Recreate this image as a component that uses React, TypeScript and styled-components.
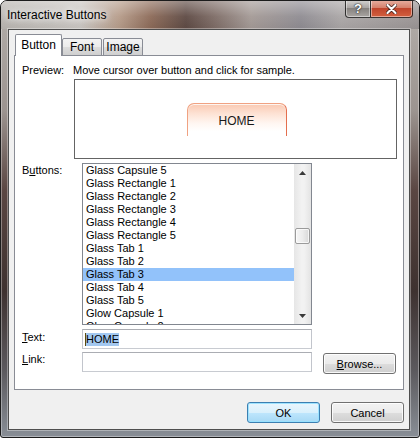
import React from "react";
import styled, { createGlobalStyle } from "styled-components";

const GlobalStyle = createGlobalStyle`
	html, body {
		margin: 0;
		padding: 0;
		background: #ffffff;
	}
	body {
		width: 420px;
		height: 438px;
		overflow: hidden;
	}
	* {
		box-sizing: border-box;
	}
`;

const uiFont = `"Liberation Sans", Arial, sans-serif`;

const Window = styled.div`
	width: 420px;
	height: 438px;
	display: flex;
	flex-direction: column;
	border: 1px solid #1c1c1c;
	border-radius: 7px 7px 3px 3px;
	overflow: hidden;
	font-family: ${uiFont};
	font-size: 11px;
	color: #000;
	background: linear-gradient(
		180deg,
		#b4afab 0px,
		#9c9490 110px,
		#5a4642 190px,
		#3e3230 290px,
		#5c5a5e 370px,
		#8a9098 438px
	);
	box-shadow: inset 0 0 0 1px rgba(255, 255, 255, 0.35);
`;

const TitleBar = styled.div`
	height: 28px;
	display: flex;
	align-items: center;
	padding-left: 6px;
	background:
		linear-gradient(180deg, rgba(255, 255, 255, 0.35), rgba(255, 255, 255, 0.05) 55%, rgba(0, 0, 0, 0.04)),
		linear-gradient(
			90deg,
			#b9b5b1 0px,
			#cbc7c3 80px,
			#b69c8a 118px,
			#8c6a58 150px,
			#5e4a44 185px,
			#7c6a64 212px,
			#a49a96 250px,
			#8f8c92 300px,
			#aaa6a6 340px,
			#9a9494 420px
		);
`;

const Title = styled.span`
	flex: 1;
	font-size: 12px;
	padding-bottom: 1px;
	text-shadow: 0 0 6px #ffffff, 0 0 10px rgba(255, 255, 255, 0.9);
`;

const CaptionGroup = styled.div`
	align-self: flex-start;
	display: flex;
	margin-right: 6px;
	margin-top: -1px;
`;

const CaptionButton = styled.div<{ $close?: boolean }>`
	width: ${(p) => (p.$close ? 42 : 26)}px;
	height: 18px;
	display: flex;
	align-items: center;
	justify-content: center;
	border: 1px solid rgba(30, 30, 30, 0.85);
	border-top: none;
	border-left-width: ${(p) => (p.$close ? 0 : 1)}px;
	border-radius: ${(p) => (p.$close ? "0 0 4px 0" : "0 0 0 4px")};
	color: #fff;
	font-weight: bold;
	font-size: 13px;
	text-shadow: 0 0 2px #222, 0 0 1px #000;
	box-shadow: inset 0 0 0 1px rgba(255, 255, 255, 0.45);
	background: ${(p) =>
		p.$close
			? "linear-gradient(180deg, #e8b0a2 0%, #d5816c 45%, #c0452c 50%, #d3603f 100%)"
			: "linear-gradient(180deg, #d6d4d2 0%, #aaa6a4 45%, #86827f 50%, #a9a5a2 100%)"};
`;

const Frame = styled.div`
	flex: 1;
	display: flex;
	padding: 0 9px 7px 7px;
`;

const Client = styled.div`
	flex: 1;
	display: flex;
	flex-direction: column;
	background: #f0f0f0;
	border: 1px solid #4e4e4e;
	box-shadow: 0 0 0 1px rgba(255, 255, 255, 0.35);
	padding: 4px 5px 0 5px;
`;

const TabStrip = styled.div`
	height: 22px;
	display: flex;
	align-items: flex-end;
	padding-left: 1px;
	margin-bottom: -1px;
	position: relative;
	z-index: 1;
`;

const Tab = styled.div<{ $active?: boolean; $w: number; $gap?: number }>`
	width: ${(p) => p.$w}px;
	height: ${(p) => (p.$active ? 22 : 18)}px;
	margin-left: ${(p) => p.$gap ?? 0}px;
	display: flex;
	align-items: center;
	justify-content: center;
	padding-bottom: ${(p) => (p.$active ? 2 : 1)}px;
	border: 1px solid #898c95;
	border-bottom: ${(p) => (p.$active ? "none" : "1px solid #898c95")};
	border-radius: 2px 2px 0 0;
	font-size: 12px;
	background: ${(p) =>
		p.$active ? "#ffffff" : "linear-gradient(180deg, #f3f3f3 0%, #ebebeb 50%, #dddddd 51%, #cfcfcf 100%)"};
`;

const Panel = styled.div`
	width: 390px;
	height: 335px;
	display: flex;
	flex-direction: column;
	background: #ffffff;
	border: 1px solid #898c95;
	padding-left: 7px;
`;

const Row = styled.div<{ $mt: number }>`
	display: flex;
	align-items: flex-start;
	margin-top: ${(p) => p.$mt}px;
`;

const Label = styled.div<{ $w: number; $pt?: number }>`
	width: ${(p) => p.$w}px;
	flex-shrink: 0;
	line-height: 13px;
	padding-top: ${(p) => p.$pt ?? 0}px;
	font-size: 11px;
`;

const Hint = styled.div`
	line-height: 13px;
`;

const PreviewBox = styled.div`
	width: 323px;
	height: 80px;
	margin: 2px 0 0 52px;
	border: 1px solid #646464;
	display: flex;
	justify-content: center;
	padding-top: 23px;
	padding-left: 2px;
`;

const GlassTab = styled.div`
	width: 100px;
	height: 33px;
	display: flex;
	justify-content: center;
	padding-top: 10px;
	font-size: 12px;
	color: #1a1a1a;
	border: 1.5px solid #f0a282;
	border-right-color: #e46f4e;
	border-bottom: none;
	border-radius: 7px 7px 0 0;
	background: linear-gradient(180deg, #fac9b2 0%, #fde2d4 30%, #fff6f1 60%, #ffffff 85%);
	box-shadow: inset 0 1px 0 rgba(255, 255, 255, 0.8);
`;

const ListBox = styled.div`
	width: 230px;
	height: 162px;
	display: flex;
	border: 1px solid #828790;
	background: #ffffff;
`;

const ListItems = styled.div`
	flex: 1;
	overflow: hidden;
`;

const ListItem = styled.div<{ $selected?: boolean }>`
	height: 13px;
	line-height: 13px;
	padding-left: 3px;
	white-space: nowrap;
	font-size: 11px;
	background: ${(p) => (p.$selected ? "#92c2fa" : "transparent")};
`;

const ScrollBar = styled.div`
	width: 17px;
	display: flex;
	flex-direction: column;
	background: linear-gradient(90deg, #e6e6e6 0%, #f2f2f2 45%, #f2f2f2 60%, #e3e3e3 100%);
`;

const ScrollArrow = styled.div`
	height: 17px;
	display: flex;
	align-items: center;
	justify-content: center;
`;

const ScrollTrack = styled.div`
	flex: 1;
	padding: 47px 1px 0 1px;
`;

const ScrollThumb = styled.div`
	height: 16px;
	border: 1px solid #9b9b9b;
	border-radius: 2px;
	background: linear-gradient(90deg, #f6f6f6 0%, #ececec 50%, #d8d8d8 100%);
	box-shadow: inset 0 0 0 1px rgba(255, 255, 255, 0.7);
`;

const TextBox = styled.div`
	width: 230px;
	height: 20px;
	display: flex;
	align-items: center;
	padding-left: 2px;
	border: 1px solid #abadb3;
	border-left-color: #c2c5cc;
	border-right-color: #c2c5cc;
	border-bottom-color: #c8cbd1;
	background: #ffffff;
	font-size: 11px;
`;

const Selection = styled.span`
	background: #a3c8f0;
	line-height: 13px;
	border-left: 1px solid #5a4a10;
`;

const PushButton = styled.div<{ $default?: boolean; $ml?: number; $mt?: number }>`
	width: 73px;
	height: 21px;
	margin-left: ${(p) => p.$ml ?? 0}px;
	margin-top: ${(p) => p.$mt ?? 0}px;
	display: flex;
	align-items: center;
	justify-content: center;
	font-size: 11px;
	border-radius: 3px;
	border: 1px solid ${(p) => (p.$default ? "#3c7fb1" : "#707070")};
	box-shadow: inset 0 0 0 1px ${(p) => (p.$default ? "rgba(150, 225, 255, 0.9)" : "rgba(255, 255, 255, 0.85)")};
	background: ${(p) =>
		p.$default
			? "linear-gradient(180deg, #eaf6fd 0%, #d9f0fc 50%, #bee6fd 51%, #a7d9f5 100%)"
			: "linear-gradient(180deg, #f2f2f2 0%, #ebebeb 50%, #dddddd 51%, #cfcfcf 100%)"};
`;

const Footer = styled.div`
	display: flex;
	justify-content: flex-end;
	gap: 11px;
	margin-top: 12px;
`;

const buttonStyles = [
	"Glass Capsule 5",
	"Glass Rectangle 1",
	"Glass Rectangle 2",
	"Glass Rectangle 3",
	"Glass Rectangle 4",
	"Glass Rectangle 5",
	"Glass Tab 1",
	"Glass Tab 2",
	"Glass Tab 3",
	"Glass Tab 4",
	"Glass Tab 5",
	"Glow Capsule 1",
	"Glow Capsule 2",
];

function Arrow({ up }: { up?: boolean }) {
	return (
		<svg width="7" height="4" viewBox="0 0 7 4">
			<path d={up ? "M0 4 L3.5 0 L7 4 Z" : "M0 0 L3.5 4 L7 0 Z"} fill="#3a3a3a" />
		</svg>
	);
}

function CloseGlyph() {
	return (
		<svg width="11" height="10" viewBox="0 0 11 10">
			<path
				d="M1.5 1 L9.5 9 M9.5 1 L1.5 9"
				stroke="#3a1a14"
				strokeWidth="3.6"
				strokeLinecap="round"
			/>
			<path d="M1.5 1 L9.5 9 M9.5 1 L1.5 9" stroke="#ffffff" strokeWidth="2.2" strokeLinecap="round" />
		</svg>
	);
}

export default function App() {
	return (
		<>
			<GlobalStyle />
			<Window>
				<TitleBar>
					<Title>Interactive Buttons</Title>
					<CaptionGroup>
						<CaptionButton>?</CaptionButton>
						<CaptionButton $close>
							<CloseGlyph />
						</CaptionButton>
					</CaptionGroup>
				</TitleBar>
				<Frame>
					<Client>
						<TabStrip>
							<Tab $active $w={47}>
								Button
							</Tab>
							<Tab $w={40}>Font</Tab>
							<Tab $w={40} $gap={1}>
								Image
							</Tab>
						</TabStrip>
						<Panel>
							<Row $mt={8}>
								<Label $w={51}>Preview:</Label>
								<Hint>Move cursor over button and click for sample.</Hint>
							</Row>
							<PreviewBox>
								<GlassTab>HOME</GlassTab>
							</PreviewBox>
							<Row $mt={4}>
								<Label $w={60} $pt={1}>
									B<u>u</u>ttons:
								</Label>
								<ListBox>
									<ListItems>
										{buttonStyles.map((name) => (
											<ListItem key={name} $selected={name === "Glass Tab 3"}>
												{name}
											</ListItem>
										))}
									</ListItems>
									<ScrollBar>
										<ScrollArrow>
											<Arrow up />
										</ScrollArrow>
										<ScrollTrack>
											<ScrollThumb />
										</ScrollTrack>
										<ScrollArrow>
											<Arrow />
										</ScrollArrow>
									</ScrollBar>
								</ListBox>
							</Row>
							<Row $mt={4}>
								<Label $w={60} $pt={2}>
									<u>T</u>ext:
								</Label>
								<TextBox>
									<Selection>HOME</Selection>
								</TextBox>
							</Row>
							<Row $mt={3}>
								<Label $w={60} $pt={1}>
									<u>L</u>ink:
								</Label>
								<TextBox />
								<PushButton $ml={11} $mt={1}>
									<span>
										<u>B</u>rowse...
									</span>
								</PushButton>
							</Row>
						</Panel>
						<Footer>
							<PushButton $default>OK</PushButton>
							<PushButton>Cancel</PushButton>
						</Footer>
					</Client>
				</Frame>
			</Window>
		</>
	);
}
